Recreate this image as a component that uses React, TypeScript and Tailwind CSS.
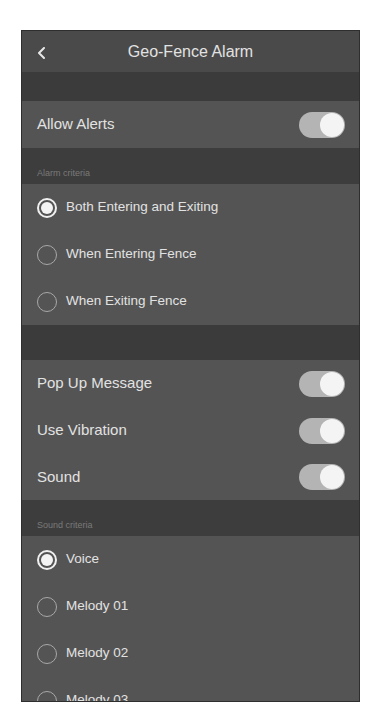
import React from "react";

function Toggle() {
  return (
    <div className="relative w-[46px] h-[26px] rounded-full bg-[#b4b4b4]">
      <div className="absolute right-[1px] top-[1px] w-[24px] h-[24px] rounded-full bg-[#f4f4f4]" />
    </div>
  );
}

function Radio({ on }: { on?: boolean }) {
  if (on) {
    return (
      <div className="w-[20px] h-[20px] shrink-0 rounded-full border-2 border-[#f0f0f0] flex items-center justify-center">
        <div className="w-[12px] h-[12px] rounded-full bg-[#f4f4f4]" />
      </div>
    );
  }
  return <div className="w-[20px] h-[20px] shrink-0 rounded-full border-[1.5px] border-[#a8a8a8]" />;
}

function ToggleRow({ label, h }: { label: string; h: string }) {
  return (
    <div className={`flex items-center justify-between pl-[15px] pr-[14px] ${h}`}>
      <span className="text-[15px] text-[#e2e2e2]">{label}</span>
      <Toggle />
    </div>
  );
}

function RadioRow({ label, on }: { label: string; on?: boolean }) {
  return (
    <div className="flex items-center h-[47px] pl-[15px] gap-[9px]">
      <Radio on={on} />
      <span className="text-[13.5px] text-[#e2e2e2]">{label}</span>
    </div>
  );
}

function SectionHeader({ label }: { label: string }) {
  return (
    <div className="h-[36px] shrink-0 bg-[#3d3d3d] flex items-end pl-[15px] pb-[6px]">
      <span className="text-[9px] text-[#7a7a7a] leading-none">{label}</span>
    </div>
  );
}

export default function App() {
  return (
    <div
      className="w-[369px] h-[715px] bg-white pt-[30px] pl-[21px]"
      style={{ fontFamily: '"Liberation Sans", Arial, sans-serif' }}
    >
      <div className="w-[339px] h-[672px] overflow-hidden bg-[#545454] border border-[#2e2e2e] flex flex-col">
        <div className="h-[41px] shrink-0 bg-[#4a4a4a] flex items-center relative">
          <svg className="absolute left-[15px] top-[16px]" width="9" height="12" viewBox="0 0 9 12" fill="none">
            <path d="M7 1L2 6l5 5" stroke="#e6e6e6" strokeWidth="2" strokeLinecap="round" strokeLinejoin="round" />
          </svg>
          <div className="w-full text-center text-[16px] text-[#e2e2e2]">Geo-Fence Alarm</div>
        </div>
        <div className="h-[29px] shrink-0 bg-[#3b3b3b]" />
        <div className="shrink-0 bg-[#545454]">
          <ToggleRow label="Allow Alerts" h="h-[47px]" />
        </div>
        <SectionHeader label="Alarm criteria" />
        <div className="shrink-0 bg-[#545454]">
          <RadioRow label="Both Entering and Exiting" on />
          <RadioRow label="When Entering Fence" />
          <RadioRow label="When Exiting Fence" />
        </div>
        <div className="h-[35px] shrink-0 bg-[#3b3b3b]" />
        <div className="shrink-0 bg-[#545454]">
          <ToggleRow label="Pop Up Message" h="h-[47px]" />
          <ToggleRow label="Use Vibration" h="h-[47px]" />
          <ToggleRow label="Sound" h="h-[46px]" />
        </div>
        <SectionHeader label="Sound criteria" />
        <div className="shrink-0 bg-[#545454]">
          <RadioRow label="Voice" on />
          <RadioRow label="Melody 01" />
          <RadioRow label="Melody 02" />
          <RadioRow label="Melody 03" />
        </div>
      </div>
    </div>
  );
}
